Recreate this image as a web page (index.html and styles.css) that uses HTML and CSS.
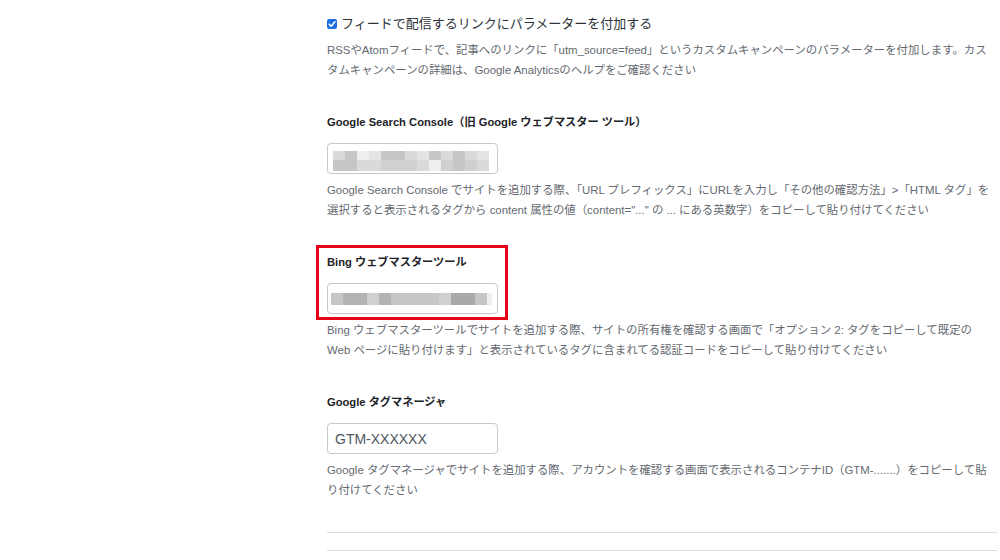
FILE: index.html
```html
<!DOCTYPE html>
<html lang="ja">
<head>
<meta charset="utf-8">
<title>設定</title>
<link rel="stylesheet" href="styles.css">
</head>
<body>
<main class="content">
  <label class="check">
    <span class="box"><svg viewBox="0 0 10 10" width="10" height="10"><path d="M2.2 5.2 L4.2 7.2 L7.9 2.8" fill="none" stroke="#fff" stroke-width="1.6" stroke-linecap="round" stroke-linejoin="round"/></svg></span>
    <span>フィードで配信するリンクにパラメーターを付加する</span>
  </label>
  <p class="desc">RSSやAtomフィードで、記事へのリンクに「utm_source=feed」というカスタムキャンペーンのパラメーターを付加します。カスタムキャンペーンの詳細は、Google Analyticsのヘルプをご確認ください</p>

  <section class="field">
    <h3 class="field-title">Google Search Console（旧 Google ウェブマスター ツール）</h3>
    <div class="input mosaic mosaic-a">
      <i class="s5"></i><i class="s3"></i><i class="s7"></i><i class="s6"></i><i class="s3"></i><i class="s3"></i><i class="s5"></i><i class="s6"></i><i class="s3"></i><i class="s5"></i><i class="s3"></i><i class="s5"></i><i class="s6"></i>
      <i class="s3"></i><i class="s3"></i><i class="s5"></i><i class="s5"></i><i class="s4"></i><i class="s4"></i><i class="s4"></i><i class="s5"></i><i class="s7"></i><i class="s4"></i><i class="s3"></i><i class="s4"></i><i class="s5"></i>
    </div>
    <p class="desc">Google Search Console でサイトを追加する際、「URL プレフィックス」にURLを入力し「その他の確認方法」&gt;「HTML タグ」を選択すると表示されるタグから content 属性の値（content="..." の ... にある英数字）をコピーして貼り付けてください</p>
  </section>

  <section class="field">
    <div class="highlight">
      <h3 class="field-title">Bing ウェブマスターツール</h3>
      <div class="input mosaic mosaic-b">
        <i class="s3"></i><i class="s2"></i><i class="s2"></i><i class="s4"></i><i class="s2"></i><i class="s3"></i><i class="s3"></i><i class="s3"></i><i class="s3"></i><i class="s4"></i><i class="s1"></i><i class="s1"></i><i class="s3"></i><i class="s7"></i>
      </div>
    </div>
    <p class="desc">Bing ウェブマスターツールでサイトを追加する際、サイトの所有権を確認する画面で「オプション 2: タグをコピーして既定の Web ページに貼り付けます」と表示されているタグに含まれてる認証コードをコピーして貼り付けてください</p>
  </section>

  <section class="field">
    <h3 class="field-title">Google タグマネージャ</h3>
    <div class="input text-input">GTM-XXXXXX</div>
    <p class="desc">Google タグマネージャでサイトを追加する際、アカウントを確認する画面で表示されるコンテナID（GTM-.......）をコピーして貼り付けてください</p>
  </section>

  <hr class="rule rule-first">
  <hr class="rule rule-second">
</main>
</body>
</html>
```

FILE: styles.css
```css
html, body {
  margin: 0;
  padding: 0;
  background: #ffffff;
}

body {
  font-family: "Liberation Sans", "Noto Sans CJK JP", sans-serif;
  color: #1d2327;
}

.content {
  margin-left: 327px;
  width: 670px;
  padding-top: 14px;
}

.check {
  display: flex;
  align-items: center;
  gap: 4px;
  font-size: 13px;
  line-height: 20px;
  color: #2c3338;
}

.box {
  display: flex;
  width: 10px;
  height: 10px;
  border-radius: 2px;
  background: #1e6fe3;
}

.desc {
  margin: 6px 0 0;
  width: 665px;
  font-size: 11.4px;
  line-height: 20px;
  color: #646970;
}

.field {
  margin-top: 34px;
}

.field-title {
  margin: 0;
  font-size: 11.2px;
  line-height: 16px;
  font-weight: 700;
  color: #1d2327;
}

.input {
  margin-top: 13px;
  width: 171px;
  height: 31px;
  box-sizing: border-box;
  border: 1px solid #c5c8cd;
  border-radius: 4px;
  background: #fff;
}

.mosaic {
  display: grid;
}

.mosaic i {
  display: block;
}

.mosaic-a {
  padding: 7px 0 0 5px;
  grid-template-columns: repeat(13, 12px);
  grid-template-rows: 9px 11px;
}

.mosaic-b {
  padding: 9px 0 0 3px;
  grid-template-columns: repeat(13, 12px) 5px;
  grid-template-rows: 12px;
}

.s1 { background: #a9a9a9; }
.s2 { background: #b3b3b3; }
.s3 { background: #c6c6c6; }
.s4 { background: #d0d0d0; }
.s5 { background: #dadada; }
.s6 { background: #e4e4e4; }
.s7 { background: #eeeeee; }

.text-input {
  display: flex;
  align-items: center;
  padding-left: 7px;
  font-size: 14px;
  color: #50575e;
}

.highlight {
  position: relative;
  width: fit-content;
}

.highlight::after {
  content: "";
  position: absolute;
  left: -11px;
  right: -10px;
  top: -9px;
  bottom: -6px;
  border: 3px solid #e8001a;
  pointer-events: none;
}

.rule {
  margin: 0;
  border: 0;
  border-top: 1px solid #dcdcde;
  width: 670px;
}

.rule-first {
  margin-top: 32px;
}

.rule-second {
  margin-top: 17px;
}
```
